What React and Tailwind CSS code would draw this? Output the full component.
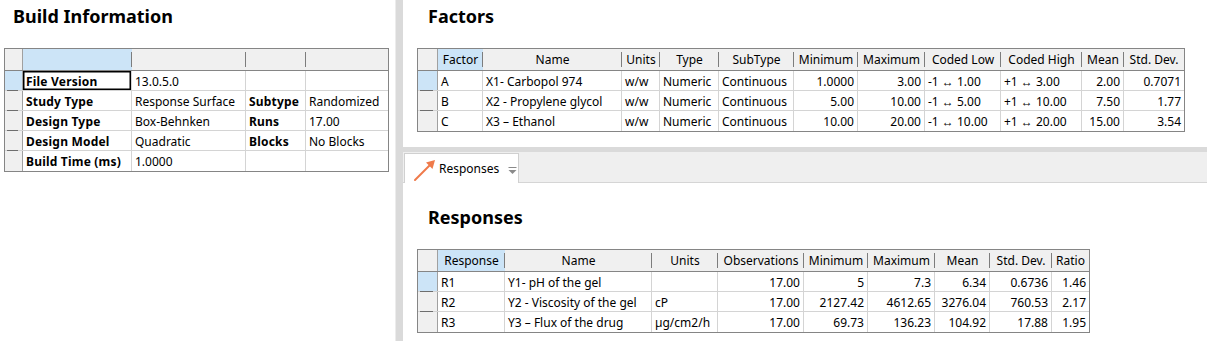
import React from "react";

const LEFT_COLS = [
  { w: "w-[109px]", sel: true, label: "" },
  { w: "w-[114px]", label: "" },
  { w: "w-[60px]", label: "" },
  { w: "w-[82px]", label: "", last: true },
];

const LEFT_ROWS = [
  [{ t: "File Version", b: true, focus: true }, { t: "13.0.5.0" }, { t: "" }, { t: "" }],
  [{ t: "Study Type", b: true }, { t: "Response Surface" }, { t: "Subtype", b: true }, { t: "Randomized" }],
  [{ t: "Design Type", b: true }, { t: "Box-Behnken" }, { t: "Runs", b: true }, { t: "17.00" }],
  [{ t: "Design Model", b: true }, { t: "Quadratic" }, { t: "Blocks", b: true }, { t: "No Blocks" }],
  [{ t: "Build Time (ms)", b: true }, { t: "1.0000" }, { t: "" }, { t: "" }],
];

const FACTOR_COLS = [
  { w: "w-[45px]", sel: true, label: "Factor" },
  { w: "w-[139px]", label: "Name" },
  { w: "w-[38px]", label: "Units" },
  { w: "w-[59px]", label: "Type" },
  { w: "w-[75px]", label: "SubType" },
  { w: "w-[64px]", label: "Minimum", r: true },
  { w: "w-[67px]", label: "Maximum", r: true },
  { w: "w-[76px]", label: "Coded Low" },
  { w: "w-[81px]", label: "Coded High" },
  { w: "w-[42px]", label: "Mean", r: true },
  { w: "w-[60px]", label: "Std. Dev.", r: true, last: true },
];

const FACTOR_ROWS = [
  ["A", "X1- Carbopol 974", "w/w", "Numeric", "Continuous", "1.0000", "3.00", "-1 \u2194 1.00", "+1 \u2194 3.00", "2.00", "0.7071"],
  ["B", "X2 - Propylene glycol", "w/w", "Numeric", "Continuous", "5.00", "10.00", "-1 \u2194 5.00", "+1 \u2194 10.00", "7.50", "1.77"],
  ["C", "X3 \u2013 Ethanol", "w/w", "Numeric", "Continuous", "10.00", "20.00", "-1 \u2194 10.00", "+1 \u2194 20.00", "15.00", "3.54"],
].map((r) => r.map((t) => ({ t })));

const RESP_COLS = [
  { w: "w-[67px]", sel: true, label: "Response" },
  { w: "w-[147px]", label: "Name" },
  { w: "w-[66px]", label: "Units" },
  { w: "w-[86px]", label: "Observations", r: true },
  { w: "w-[64px]", label: "Minimum", r: true },
  { w: "w-[67px]", label: "Maximum", r: true },
  { w: "w-[55px]", label: "Mean", r: true },
  { w: "w-[62px]", label: "Std. Dev.", r: true },
  { w: "w-[37px]", label: "Ratio", r: true, last: true },
];

const RESP_ROWS = [
  ["R1", "Y1- pH of the gel", "", "17.00", "5", "7.3", "6.34", "0.6736", "1.46"],
  ["R2", "Y2 - Viscosity of the gel", "cP", "17.00", "2127.42", "4612.65", "3276.04", "760.53", "2.17"],
  ["R3", "Y3 \u2013 Flux of the drug", "\u00b5g/cm2/h", "17.00", "69.73", "136.23", "104.92", "17.88", "1.95"],
].map((r) => r.map((t) => ({ t })));

function Grid({ cols, rows, rowHdrW }) {
  return (
    <div className="inline-block border border-[#858585] bg-white">
      <div className="flex h-[22px] border-b border-[#858585] bg-[#f0f0f0]">
        <div className={`${rowHdrW} shrink-0 border-r border-[#a0a0a0] bg-[#f0f0f0]`} />
        {cols.map((c, i) => (
          <div
            key={i}
            className={`${c.w} shrink-0 relative flex items-center justify-center whitespace-nowrap overflow-hidden pt-[1px] ${
              c.sel ? "bg-[#cce4f7]" : ""
            } ${
              c.last
                ? ""
                : "after:content-[''] after:absolute after:right-0 after:top-[3px] after:bottom-[3px] after:w-px after:bg-[#7d7d7d]"
            }`}
          >
            {c.label}
          </div>
        ))}
      </div>
      {rows.map((row, ri) => (
        <div key={ri} className={`flex h-[20px] ${ri < rows.length - 1 ? "border-b border-[#d4d4d4]" : ""}`}>
          <div
            className={`${rowHdrW} shrink-0 relative border-r border-[#a0a0a0] ${
              ri === 0 ? "bg-[#cce4f7]" : "bg-[#f0f0f0]"
            }`}
          >
            {ri < rows.length - 1 && (
              <div className="absolute left-[2px] right-[4px] bottom-[-1px] h-px bg-[#6e6e6e]" />
            )}
          </div>
          {cols.map((c, ci) => {
            const cell = row[ci];
            return (
              <div
                key={ci}
                className={`${c.w} shrink-0 flex items-center whitespace-nowrap overflow-hidden px-[3px] pt-[2px] ${
                  c.r ? "justify-end" : "justify-start"
                } ${c.last ? "" : "border-r border-[#d4d4d4]"} ${cell.b ? "font-bold tracking-[0.2px]" : ""} ${
                  cell.focus ? "shadow-[inset_0_0_0_1.5px_#000]" : ""
                }`}
              >
                {cell.t}
              </div>
            );
          })}
        </div>
      ))}
    </div>
  );
}

function Title({ children, className = "" }) {
  return (
    <h1 className={`h-[24px] text-[18px] font-bold leading-[24px] whitespace-nowrap ${className}`}>{children}</h1>
  );
}

export default function App() {
  return (
    <div className="w-[1207px] h-[341px] flex bg-white overflow-hidden text-[12px] text-black font-['Noto_Sans',sans-serif]">
      <div className="w-[395px] shrink-0 pl-[4px]">
        <Title className="ml-[9px] mt-[4px]">Build Information</Title>
        <div className="mt-[20px]">
          <Grid cols={LEFT_COLS} rows={LEFT_ROWS} rowHdrW="w-[18px]" />
        </div>
      </div>
      <div className="w-[8px] shrink-0 border-l border-[#ececec] bg-[#dadada]" />
      <div className="flex-1 flex flex-col min-w-0">
        <div className="h-[147px] shrink-0 pl-[14px]">
          <Title className="ml-[11px] mt-[4px]">Factors</Title>
          <div className="mt-[20px]">
            <Grid cols={FACTOR_COLS} rows={FACTOR_ROWS} rowHdrW="w-[20px]" />
          </div>
        </div>
        <div className="h-[5px] shrink-0 bg-[#dadada]" />
        <div className="h-[31px] shrink-0 flex items-end bg-[#efefef] border-b border-[#d5d5d5]">
          <div className="ml-[1px] mb-[-1px] w-[115px] h-[30px] bg-white border-t border-l border-r border-[#d0d0d0] flex items-center">
            <svg width="24" height="24" viewBox="0 0 24 24" className="ml-[8px] mt-[2px] shrink-0">
              <line x1="2" y1="22" x2="18" y2="6" stroke="#ef7a4a" strokeWidth="2" strokeLinecap="round" />
              <polygon points="22,2 13,4.5 19.5,11" fill="#ef7a4a" />
            </svg>
            <span className="ml-[2px] text-[12px]">Responses</span>
            <svg width="9" height="8" viewBox="0 0 9 8" className="ml-[9px] mt-[4px] shrink-0">
              <rect x="0.5" y="0" width="8" height="1" fill="#8a8a8a" />
              <polygon points="0.5,3 8.5,3 4.5,7" fill="#8a8a8a" />
            </svg>
          </div>
        </div>
        <div className="flex-1 pl-[14px]">
          <Title className="ml-[11px] mt-[22px]">Responses</Title>
          <div className="mt-[20px]">
            <Grid cols={RESP_COLS} rows={RESP_ROWS} rowHdrW="w-[20px]" />
          </div>
        </div>
      </div>
    </div>
  );
}
